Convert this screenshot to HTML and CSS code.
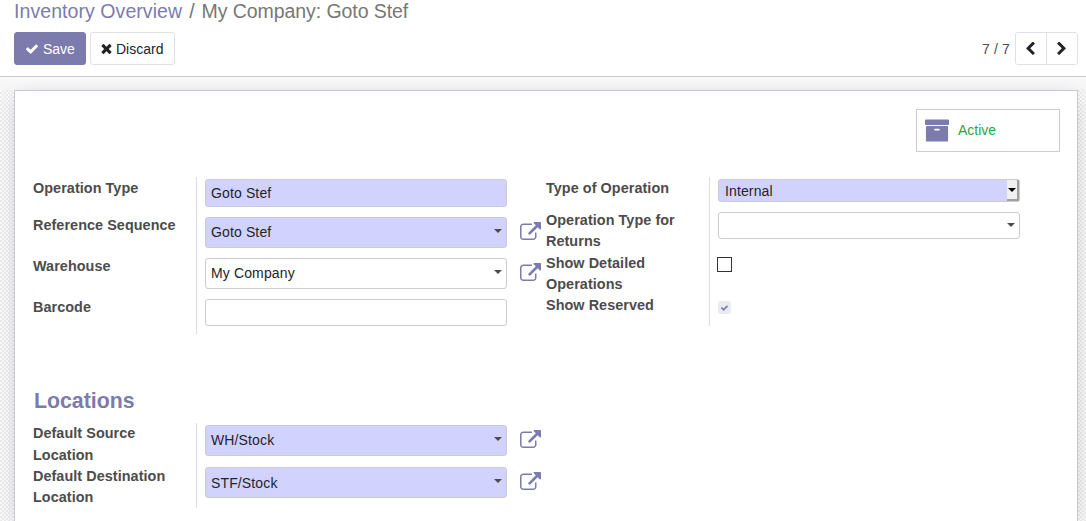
FILE: index.html
```html
<!DOCTYPE html>
<html lang="en">
<head>
<meta charset="utf-8">
<title>My Company: Goto Stef</title>
<link rel="stylesheet" href="styles.css">
</head>
<body>
<svg class="defs" aria-hidden="true">
  <symbol id="check" viewBox="121 298 1550 1224"><path d="M1671 566q0 40-28 68l-724 724-136 136q-28 28-68 28t-68-28l-136-136-362-362q-28-28-28-68t28-68l136-136q28-28 68-28t68 28l294 295 656-657q28-28 68-28t68 28l136 136q28 28 28 68z"/></symbol>
  <symbol id="times" viewBox="302 366 1188 1188"><path d="M1490 1322q0 40-28 68l-136 136q-28 28-68 28t-68-28l-294-294-294 294q-28 28-68 28t-68-28l-136-136q-28-28-28-68t28-68l294-294-294-294q-28-28-28-68t28-68l136-136q28-28 68-28t68 28l294 294 294-294q28-28 68-28t68 28l136 136q28 28 28 68t-28 68l-294 294 294 294q28 28 28 68z"/></symbol>
  <symbol id="chevron" viewBox="410 71 1036 1567"><path d="M1427 301l-531 531 531 531q19 19 19 45t-19 45l-166 166q-19 19-45 19t-45-19l-742-742q-19-19-19-45t19-45l742-742q19-19 45-19t45 19l166 166q19 19 19 45t-19 45z"/></symbol>
  <symbol id="archive" viewBox="64 128 1664 1536"><path d="M1088 832q0-26-19-45t-45-19h-256q-26 0-45 19t-19 45 19 45 45 19h256q26 0 45-19t19-45zm576-192v960q0 26-19 45t-45 19h-1408q-26 0-45-19t-19-45v-960q0-26 19-45t45-19h1408q26 0 45 19t19 45zm64-448v256q0 26-19 45t-45 19h-1536q-26 0-45-19t-19-45v-256q0-26 19-45t45-19h1536q26 0 45 19t19 45z"/></symbol>
  <symbol id="external" viewBox="0 0 1792 1536"><path d="M1408 928v320q0 119-84.500 203.500t-203.500 84.500h-832q-119 0-203.500-84.500t-84.500-203.500v-832q0-119 84.500-203.500t203.500-84.500h704q14 0 23 9t9 23v64q0 14-9 23t-23 9h-704q-66 0-113 47t-47 113v832q0 66 47 113t113 47h832q66 0 113-47t47-113v-320q0-14 9-23t23-9h64q14 0 23 9t9 23zm384-864v512q0 26-19 45t-45 19-45-19l-176-176-652 652q-10 10-23 10t-23-10l-114-114q-10-10-10-23t10-23l652-652-176-176q-19-19-19-45t19-45 45-19h512q26 0 45 19t19 45z"/></symbol>
</svg>

<header class="control-panel">
  <nav class="breadcrumb"><a class="crumb">Inventory Overview</a><span class="sep">/</span><span class="current">My Company: Goto Stef</span></nav>
  <div class="toolbar">
    <button class="btn primary"><svg class="i-check"><use href="#check"/></svg><span class="caption">Save</span></button>
    <button class="btn discard"><svg class="i-times"><use href="#times"/></svg><span class="caption">Discard</span></button>
    <span class="pager">7 / 7</span>
    <div class="pager-buttons">
      <button class="page"><svg class="i-chevron"><use href="#chevron"/></svg></button>
      <button class="page"><svg class="i-chevron flip"><use href="#chevron"/></svg></button>
    </div>
  </div>
</header>

<main class="content">
  <section class="sheet">
    <div class="button-box">
      <button class="stat"><svg class="i-archive"><use href="#archive"/></svg>Active</button>
    </div>
    <div class="columns">
      <div class="group main-left">
        <div class="row"><label class="label low">Operation Type</label><div class="cell"><div class="input required tall">Goto Stef</div></div></div>
        <div class="row"><label class="label">Reference Sequence</label><div class="cell"><div class="input required many">Goto Stef<i class="caret"></i></div><svg class="i-external"><use href="#external"/></svg></div></div>
        <div class="row"><label class="label">Warehouse</label><div class="cell"><div class="input many">My Company<i class="caret"></i></div><svg class="i-external"><use href="#external"/></svg></div></div>
        <div class="row"><label class="label">Barcode</label><div class="cell"><div class="input"></div></div></div>
      </div>
      <div class="group main-right">
        <div class="row"><label class="label low">Type of Operation</label><div class="cell"><div class="input required select"><span class="caption">Internal</span><span class="select-button"><i class="caret"></i></span></div></div></div>
        <div class="row"><label class="label">Operation Type for Returns</label><div class="cell"><div class="input"><i class="caret"></i></div></div></div>
        <div class="row"><label class="label">Show Detailed Operations</label><div class="cell"><span class="checkbox"></span></div></div>
        <div class="row"><label class="label">Show Reserved</label><div class="cell"><span class="checkbox disabled"><svg class="i-tick"><use href="#check"/></svg></span></div></div>
      </div>
    </div>
    <h2 class="title">Locations</h2>
    <div class="group locations">
      <div class="row"><label class="label loose">Default Source Location</label><div class="cell"><div class="input required many">WH/Stock<i class="caret"></i></div><svg class="i-external"><use href="#external"/></svg></div></div>
      <div class="row"><label class="label low">Default Destination Location</label><div class="cell"><div class="input required many"><span class="caption">STF/Stock</span><i class="caret"></i></div><svg class="i-external"><use href="#external"/></svg></div></div>
    </div>
  </section>
</main>
</body>
</html>
```
FILE: styles.css
```css
* { box-sizing: border-box; }
body {
  margin: 0;
  height: 521px;
  overflow: hidden;
  display: flex;
  flex-direction: column;
  background: #fff;
  color: #4c4c4c;
  font: 14px/21px "Liberation Sans", Arial, sans-serif;
}
svg { display: block; flex: none; fill: currentColor; }
.defs { display: none; }
button { font: inherit; padding: 0; margin: 0; color: inherit; background: #fff; }

.control-panel {
  flex: none;
  height: 77px;
  padding: 0 8px 0 14px;
  border-bottom: 1px solid #cacccb;
}
.breadcrumb { height: 32px; padding-top: 1px; font-size: 19.5px; line-height: 21px; color: #777; white-space: nowrap; }
.crumb { color: #7c7bad; letter-spacing: .07px; }
.current { letter-spacing: -.07px; }
.sep { margin: 0 7px; color: #6c757d; }
.toolbar { display: flex; align-items: center; }
.btn {
  display: flex;
  align-items: center;
  height: 33px;
  border: 1px solid #dee2e6;
  border-radius: 3px;
  color: #212529;
}
.caption { padding-top: 2px; }
.primary { width: 72px; padding-left: 11px; gap: 5px; background: #7c7bad; border-color: #7c7bad; color: #fff; }
.discard { width: 85px; margin-left: 4px; padding-left: 10px; gap: 5px; }
.i-check { width: 12px; height: 10px; }
.i-times { width: 11px; height: 10px; margin-right: -1px; }
.pager { margin-left: auto; margin-right: 5px; padding-top: 2px; letter-spacing: .15px; }
.pager-buttons { display: flex; width: 63px; height: 33px; border: 1px solid #dee2e6; border-radius: 3px; overflow: hidden; }
.page { flex: 1; display: flex; align-items: center; justify-content: center; border: 0; color: #212529; }
.page + .page { border-left: 1px solid #dee2e6; padding-right: 1px; }
.i-chevron { width: 9px; height: 13px; }
.flip { transform: scaleX(-1); }

.content {
  flex: 1;
  min-height: 0;
  display: flex;
  flex-direction: column;
  overflow: hidden;
  padding: 13px 8px 0 14px;
  background:
    linear-gradient(#f9f9f9, #f4f4f4) 0 0 / 100% 13px no-repeat,
    repeating-conic-gradient(#ececec 0 25%, #f9f9f9 0 50%) 0 1px / 4px 4px;
}
.sheet {
  flex: 1;
  min-height: 0;
  padding: 18px 17px 0 18px;
  background: #fff;
  border: 1px solid #c8c8d3;
  border-bottom: 0;
  box-shadow: 0 5px 20px -5px rgba(0, 0, 0, .2);
}
.button-box { display: flex; justify-content: flex-end; height: 68px; }
.stat {
  display: flex;
  align-items: center;
  gap: 9px;
  width: 144px;
  height: 43px;
  padding-left: 8px;
  border: 1px solid #ccc;
  color: #28a745;
}
.i-archive { width: 24px; height: 23px; color: #7c7bad; }
.columns { display: flex; align-items: flex-start; height: 208px; }
.group { display: grid; width: 513px; }
.main-left { grid-template-rows: 38px 41px 41px 37px; }
.main-right { grid-template-rows: 33px 43px 42px 31px; }
.locations { grid-template-rows: 42px 43px; }
.row { display: grid; grid-template-columns: 163px 1fr; }
.label { padding-right: 16px; font-size: 14.4px; font-weight: bold; letter-spacing: .06px; }
.low { padding-top: 1px; }
.loose { line-height: 22px; margin-top: -1px; }
.cell { display: flex; align-items: flex-start; border-left: 1px solid #ddd; padding: 2px 0 0 8px; }
.input {
  display: flex;
  align-items: center;
  width: 302px;
  height: 27px;
  padding: 0 4px 0 5px;
  border: 1px solid #ccc;
  border-radius: 3px;
  background: #fff;
  color: #212529;
  letter-spacing: .13px;
}
.required { background: #d2d2ff; }
.tall { height: 28px; }
.many { height: 31px; }
.caret { margin: 0 0 2px auto; border: 4px solid transparent; border-top-color: #4c4c4c; border-bottom: 0; }
.many .caret { margin-bottom: 3px; }
.select { height: 23px; padding: 0 0 0 6px; }
.select-button {
  display: flex;
  align-items: center;
  width: 12px;
  height: 21px;
  margin-left: auto;
  background: #f0f0ee;
  border-right: 2px solid #a0a0a0;
  border-bottom: 2px solid #a0a0a0;
}
.select-button .caret { margin: 0 0 0 1px; border-top-color: #000; }
.i-external { width: 21px; height: 18px; margin: 5px 0 0 13px; color: #7c7bad; }
.checkbox { width: 15px; height: 15px; margin: 2px 0 0 -1px; border: 1px solid #333; background: #fff; }
.disabled { display: flex; align-items: center; justify-content: center; width: 13px; height: 13px; margin: 4px 0 0; border: 0; border-radius: 3px; background: #e9ecef; color: #7c7bad; }
.i-tick { width: 7px; height: 6px; }
.title { height: 38px; margin: 0; padding: 6px 0 0 1px; font-size: 21.3px; line-height: 21px; color: #7c7bad; }
```
